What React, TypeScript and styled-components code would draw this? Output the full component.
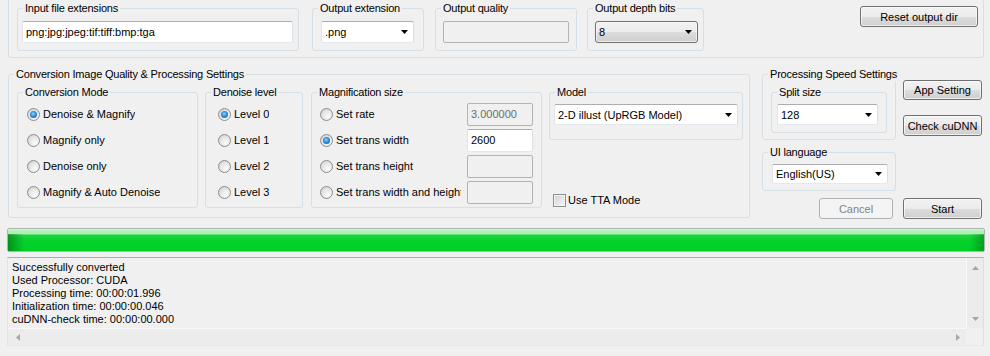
import React from "react";
import styled, { createGlobalStyle, css } from "styled-components";

const GlobalStyle = createGlobalStyle`
  html, body {
    margin: 0;
    padding: 0;
    background: #f0f0f0;
  }
  body {
    font-family: "Liberation Sans", Arial, sans-serif;
    font-size: 11px;
    color: #000;
  }
  * {
    box-sizing: border-box;
  }
`;

const Window = styled.div`
  width: 990px;
  height: 356px;
  overflow: hidden;
  background: #f0f0f0;
`;

const TopPanel = styled.div`
  margin-left: 8px;
  width: 976px;
  height: 58px;
  border: 1px solid #d5dfe5;
  border-top: none;
  border-radius: 0 0 3px 3px;
  display: flex;
  align-items: flex-start;
  padding: 8px 5px 0 8px;
`;

const Group = styled.div<{ $w: number; $h: number; $pad: string; $ml?: number; $col?: boolean }>`
  position: relative;
  flex: none;
  width: ${(p) => p.$w}px;
  height: ${(p) => p.$h}px;
  margin-left: ${(p) => p.$ml ?? 0}px;
  padding: ${(p) => p.$pad};
  border: 1px solid #d5dfe5;
  border-radius: 3px;
  display: flex;
  flex-direction: ${(p) => (p.$col ? "column" : "row")};
  align-items: flex-start;
`;

const Legend = styled.span`
  position: absolute;
  top: -8px;
  left: 5px;
  padding: 0 2px;
  background: #f0f0f0;
  line-height: 14px;
  letter-spacing: -0.2px;
  white-space: nowrap;
`;

const TextBox = styled.div<{ $w: number; $h?: number; $disabled?: boolean }>`
  flex: none;
  width: ${(p) => p.$w}px;
  height: ${(p) => p.$h ?? 22}px;
  display: flex;
  align-items: center;
  padding: 0 3px;
  border: 1px solid;
  border-color: #abadb3 #dbdfe6 #e3e9ef #e2e3ea;
  border-radius: 2px;
  background: #fff;
  white-space: nowrap;
  ${(p) =>
    p.$disabled &&
    css`
      border-color: #b4b4b4;
      background: #f0f0f0;
      color: #6d6d6d;
    `}
`;

const SideBox = styled(TextBox)`
  margin-left: auto;
`;

const Combo = styled(TextBox)`
  justify-content: space-between;
  padding-right: 5px;
`;

const DropList = styled.div<{ $w: number }>`
  flex: none;
  width: ${(p) => p.$w}px;
  height: 22px;
  display: flex;
  align-items: center;
  justify-content: space-between;
  padding: 0 5px 0 3px;
  border: 1px solid #707070;
  border-radius: 3px;
  background: linear-gradient(#f2f2f2 0%, #ebebeb 50%, #dddddd 51%, #cfcfcf 100%);
  box-shadow: inset 0 0 0 1px rgba(255, 255, 255, 0.6);
`;

const Arrow = () => (
  <svg width="7" height="4" viewBox="0 0 7 4">
    <polygon points="0,0 7,0 3.5,4" fill="#000" />
  </svg>
);

const Button = styled.div<{ $w: number; $h?: number; $disabled?: boolean }>`
  flex: none;
  width: ${(p) => p.$w}px;
  height: ${(p) => p.$h ?? 21}px;
  display: flex;
  align-items: center;
  justify-content: center;
  border: 1px solid #707070;
  border-radius: 3px;
  background: linear-gradient(#f2f2f2 0%, #ebebeb 50%, #dddddd 51%, #cfcfcf 100%);
  box-shadow: inset 0 0 0 1px rgba(255, 255, 255, 0.65);
  white-space: nowrap;
  ${(p) =>
    p.$disabled &&
    css`
      border-color: #adb2b5;
      background: #f4f4f4;
      box-shadow: none;
      color: #838383;
    `}
`;

const ResetButton = styled(Button)`
  margin-left: auto;
  margin-top: -2px;
`;

const MiddleRow = styled.div`
  margin-top: 16px;
  padding-left: 8px;
  display: flex;
  align-items: flex-start;
  height: 145px;
`;

const OptionRow = styled.div<{ $w?: number }>`
  display: flex;
  align-items: center;
  height: 26px;
  width: ${(p) => (p.$w ? `${p.$w}px` : "auto")};
  white-space: nowrap;
`;

const RadioCircle = styled.span<{ $checked?: boolean }>`
  position: relative;
  flex: none;
  width: 13px;
  height: 13px;
  margin-right: 3px;
  border-radius: 50%;
  border: 1px solid #8d8d8d;
  background: radial-gradient(circle at 65% 70%, #fbfbfb 0%, #e4e4e4 55%, #c9c9c9 100%);
  ${(p) =>
    p.$checked &&
    css`
      &::after {
        content: "";
        position: absolute;
        left: 2px;
        top: 2px;
        width: 7px;
        height: 7px;
        border-radius: 50%;
        background: radial-gradient(circle at 45% 40%, #8fd3ff 0%, #2e8fd8 45%, #124f8c 100%);
      }
    `}
`;

const OptionLabel = styled.span<{ $w?: number }>`
  display: block;
  overflow: hidden;
  white-space: nowrap;
  width: ${(p) => (p.$w ? `${p.$w}px` : "auto")};
`;

const ModelColumn = styled.div`
  flex: none;
  margin-left: 7px;
  width: 194px;
  height: 116px;
  display: flex;
  flex-direction: column;
`;

const CheckRow = styled.div`
  margin-top: auto;
  margin-bottom: 1px;
  padding-left: 4px;
  display: flex;
  align-items: center;
  height: 14px;
`;

const CheckBox = styled.span`
  flex: none;
  width: 13px;
  height: 13px;
  margin-right: 2px;
  border: 1px solid #8e8f8f;
  box-shadow: inset 0 0 0 1px #f4f4f4;
  background: linear-gradient(135deg, #cbcfd5 0%, #e3e5e8 50%, #f6f6f6 100%);
`;

const RightColumn = styled.div`
  flex: none;
  margin-left: 12px;
  width: 220px;
  display: flex;
  flex-direction: column;
`;

const RightTop = styled.div`
  display: flex;
  align-items: flex-start;
  gap: 7px;
`;

const LanguageSlot = styled.div`
  margin-top: 12px;
`;

const ButtonStack = styled.div`
  display: flex;
  flex-direction: column;
  gap: 15px;
  padding-top: 6px;
`;

const ActionRow = styled.div`
  margin-top: 7px;
  display: flex;
  justify-content: flex-end;
  gap: 10px;
`;

const Progress = styled.div`
  position: relative;
  margin: 9px 0 0 7px;
  width: 978px;
  height: 24px;
  border: 1px solid #b2b2b2;
  border-radius: 2px;
  background: linear-gradient(
    #e8fbe9 0px,
    #b6f2bb 1px,
    #a9efb1 5px,
    #1ed33d 6px,
    #03d12a 12px,
    #00cf28 100%
  );
  &::after {
    content: "";
    position: absolute;
    inset: 5px 0 0 0;
    background: linear-gradient(
      to right,
      rgba(0, 70, 10, 0.45) 0px,
      rgba(0, 70, 10, 0) 16px,
      rgba(0, 70, 10, 0) calc(100% - 14px),
      rgba(0, 70, 10, 0.35) 100%
    );
  }
`;

const Log = styled.div`
  margin: 5px 0 0 7px;
  width: 977px;
  height: 89px;
  border: 1px solid;
  border-color: #abadb3 #dbdfe6 #e3e9ef #e2e3ea;
  display: grid;
  grid-template-columns: 1fr 17px;
  grid-template-rows: 1fr 17px;
  background: #f0f0f0;
`;

const LogText = styled.div`
  padding: 3px 0 0 4px;
  line-height: 13px;
  overflow: hidden;
`;

const ScrollBar = styled.div<{ $vertical?: boolean }>`
  display: flex;
  flex-direction: ${(p) => (p.$vertical ? "column" : "row")};
  align-items: center;
  justify-content: space-between;
  background: #ececec;
  ${(p) =>
    p.$vertical
      ? css`
          border-left: 1px solid #f9f9f9;
          padding: 8px 0 7px;
        `
      : css`
          border-top: 1px solid #f9f9f9;
          padding: 0 6px 0 8px;
        `}
`;

const Corner = styled.div`
  background: #f0f0f0;
`;

const ScrollArrow = ({ dir }: { dir: "up" | "down" | "left" | "right" }) => {
  const pts = {
    up: "0,4 7,4 3.5,0",
    down: "0,0 7,0 3.5,4",
    left: "4,0 4,7 0,3.5",
    right: "0,0 0,7 4,3.5",
  }[dir];
  const horiz = dir === "left" || dir === "right";
  return (
    <svg width={horiz ? 4 : 7} height={horiz ? 7 : 4} viewBox={horiz ? "0 0 4 7" : "0 0 7 4"}>
      <polygon points={pts} fill="#a6a6a6" />
    </svg>
  );
};

const Radio = ({ label, checked, w }: { label: string; checked?: boolean; w?: number }) => (
  <>
    <RadioCircle $checked={checked} />
    <OptionLabel $w={w}>{label}</OptionLabel>
  </>
);

const logLines = [
  "Successfully converted",
  "Used Processor: CUDA",
  "Processing time: 00:00:01.996",
  "Initialization time: 00:00:00.046",
  "cuDNN-check time: 00:00:00.000",
];

export default function App() {
  return (
    <Window>
      <GlobalStyle />
      <TopPanel>
        <Group $w={282} $h={43} $pad="12px 0 0 4px">
          <Legend>Input file extensions</Legend>
          <TextBox $w={271}>png:jpg:jpeg:tif:tiff:bmp:tga</TextBox>
        </Group>
        <Group $w={112} $h={43} $pad="12px 0 0 8px" $ml={13}>
          <Legend>Output extension</Legend>
          <Combo $w={93}>
            .png
            <Arrow />
          </Combo>
        </Group>
        <Group $w={142} $h={43} $pad="12px 0 0 7px" $ml={11}>
          <Legend>Output quality</Legend>
          <TextBox $w={126} $h={22} $disabled />
        </Group>
        <Group $w={117} $h={43} $pad="12px 0 0 7px" $ml={10}>
          <Legend>Output depth bits</Legend>
          <DropList $w={103}>
            8
            <Arrow />
          </DropList>
        </Group>
        <ResetButton $w={118}>Reset output dir</ResetButton>
      </TopPanel>

      <MiddleRow>
        <Group $w={742} $h={144} $pad="17px 0 0 8px">
          <Legend>Conversion Image Quality &amp; Processing Settings</Legend>
          <Group $w={181} $h={116} $pad="8px 0 0 9px" $col>
            <Legend>Conversion Mode</Legend>
            <OptionRow>
              <Radio label="Denoise & Magnify" checked />
            </OptionRow>
            <OptionRow>
              <Radio label="Magnify only" />
            </OptionRow>
            <OptionRow>
              <Radio label="Denoise only" />
            </OptionRow>
            <OptionRow>
              <Radio label="Magnify & Auto Denoise" />
            </OptionRow>
          </Group>
          <Group $w={98} $h={116} $pad="8px 0 0 12px" $ml={7} $col>
            <Legend>Denoise level</Legend>
            {[0, 1, 2, 3].map((n) => (
              <OptionRow key={n}>
                <Radio label={`Level ${n}`} checked={n === 0} />
              </OptionRow>
            ))}
          </Group>
          <Group $w={231} $h={116} $pad="8px 8px 0 8px" $ml={8} $col>
            <Legend>Magnification size</Legend>
            <OptionRow $w={213}>
              <Radio label="Set rate" w={125} />
              <SideBox $w={66} $h={23} $disabled>
                3.000000
              </SideBox>
            </OptionRow>
            <OptionRow $w={213}>
              <Radio label="Set trans width" checked w={125} />
              <SideBox $w={66} $h={23}>
                2600
              </SideBox>
            </OptionRow>
            <OptionRow $w={213}>
              <Radio label="Set trans height" w={125} />
              <SideBox $w={66} $h={23} $disabled />
            </OptionRow>
            <OptionRow $w={213}>
              <Radio label="Set trans width and height" w={125} />
              <SideBox $w={66} $h={23} $disabled />
            </OptionRow>
          </Group>
          <ModelColumn>
            <Group $w={194} $h={48} $pad="11px 0 0 4px">
              <Legend>Model</Legend>
              <Combo $w={184} $h={21}>
                2-D illust (UpRGB Model)
                <Arrow />
              </Combo>
            </Group>
            <CheckRow>
              <CheckBox />
              Use TTA Mode
            </CheckRow>
          </ModelColumn>
        </Group>

        <RightColumn>
          <RightTop>
            <Group $w={134} $h={66} $pad="17px 0 0 8px">
              <Legend>Processing Speed Settings</Legend>
              <Group $w={116} $h={41} $pad="11px 0 0 5px">
                <Legend>Split size</Legend>
                <Combo $w={101} $h={21}>
                  128
                  <Arrow />
                </Combo>
              </Group>
            </Group>
            <ButtonStack>
              <Button $w={79} $h={20}>
                App Setting
              </Button>
              <Button $w={79}>Check cuDNN</Button>
            </ButtonStack>
          </RightTop>
          <LanguageSlot>
            <Group $w={134} $h={39} $pad="11px 0 0 9px">
              <Legend>UI language</Legend>
              <Combo $w={116} $h={20}>
                English(US)
                <Arrow />
              </Combo>
            </Group>
          </LanguageSlot>
          <ActionRow>
            <Button $w={74} $disabled>
              Cancel
            </Button>
            <Button $w={79}>Start</Button>
          </ActionRow>
        </RightColumn>
      </MiddleRow>

      <Progress />

      <Log>
        <LogText>
          {logLines.map((l) => (
            <div key={l}>{l}</div>
          ))}
        </LogText>
        <ScrollBar $vertical>
          <ScrollArrow dir="up" />
          <ScrollArrow dir="down" />
        </ScrollBar>
        <ScrollBar>
          <ScrollArrow dir="left" />
          <ScrollArrow dir="right" />
        </ScrollBar>
        <Corner />
      </Log>
    </Window>
  );
}
